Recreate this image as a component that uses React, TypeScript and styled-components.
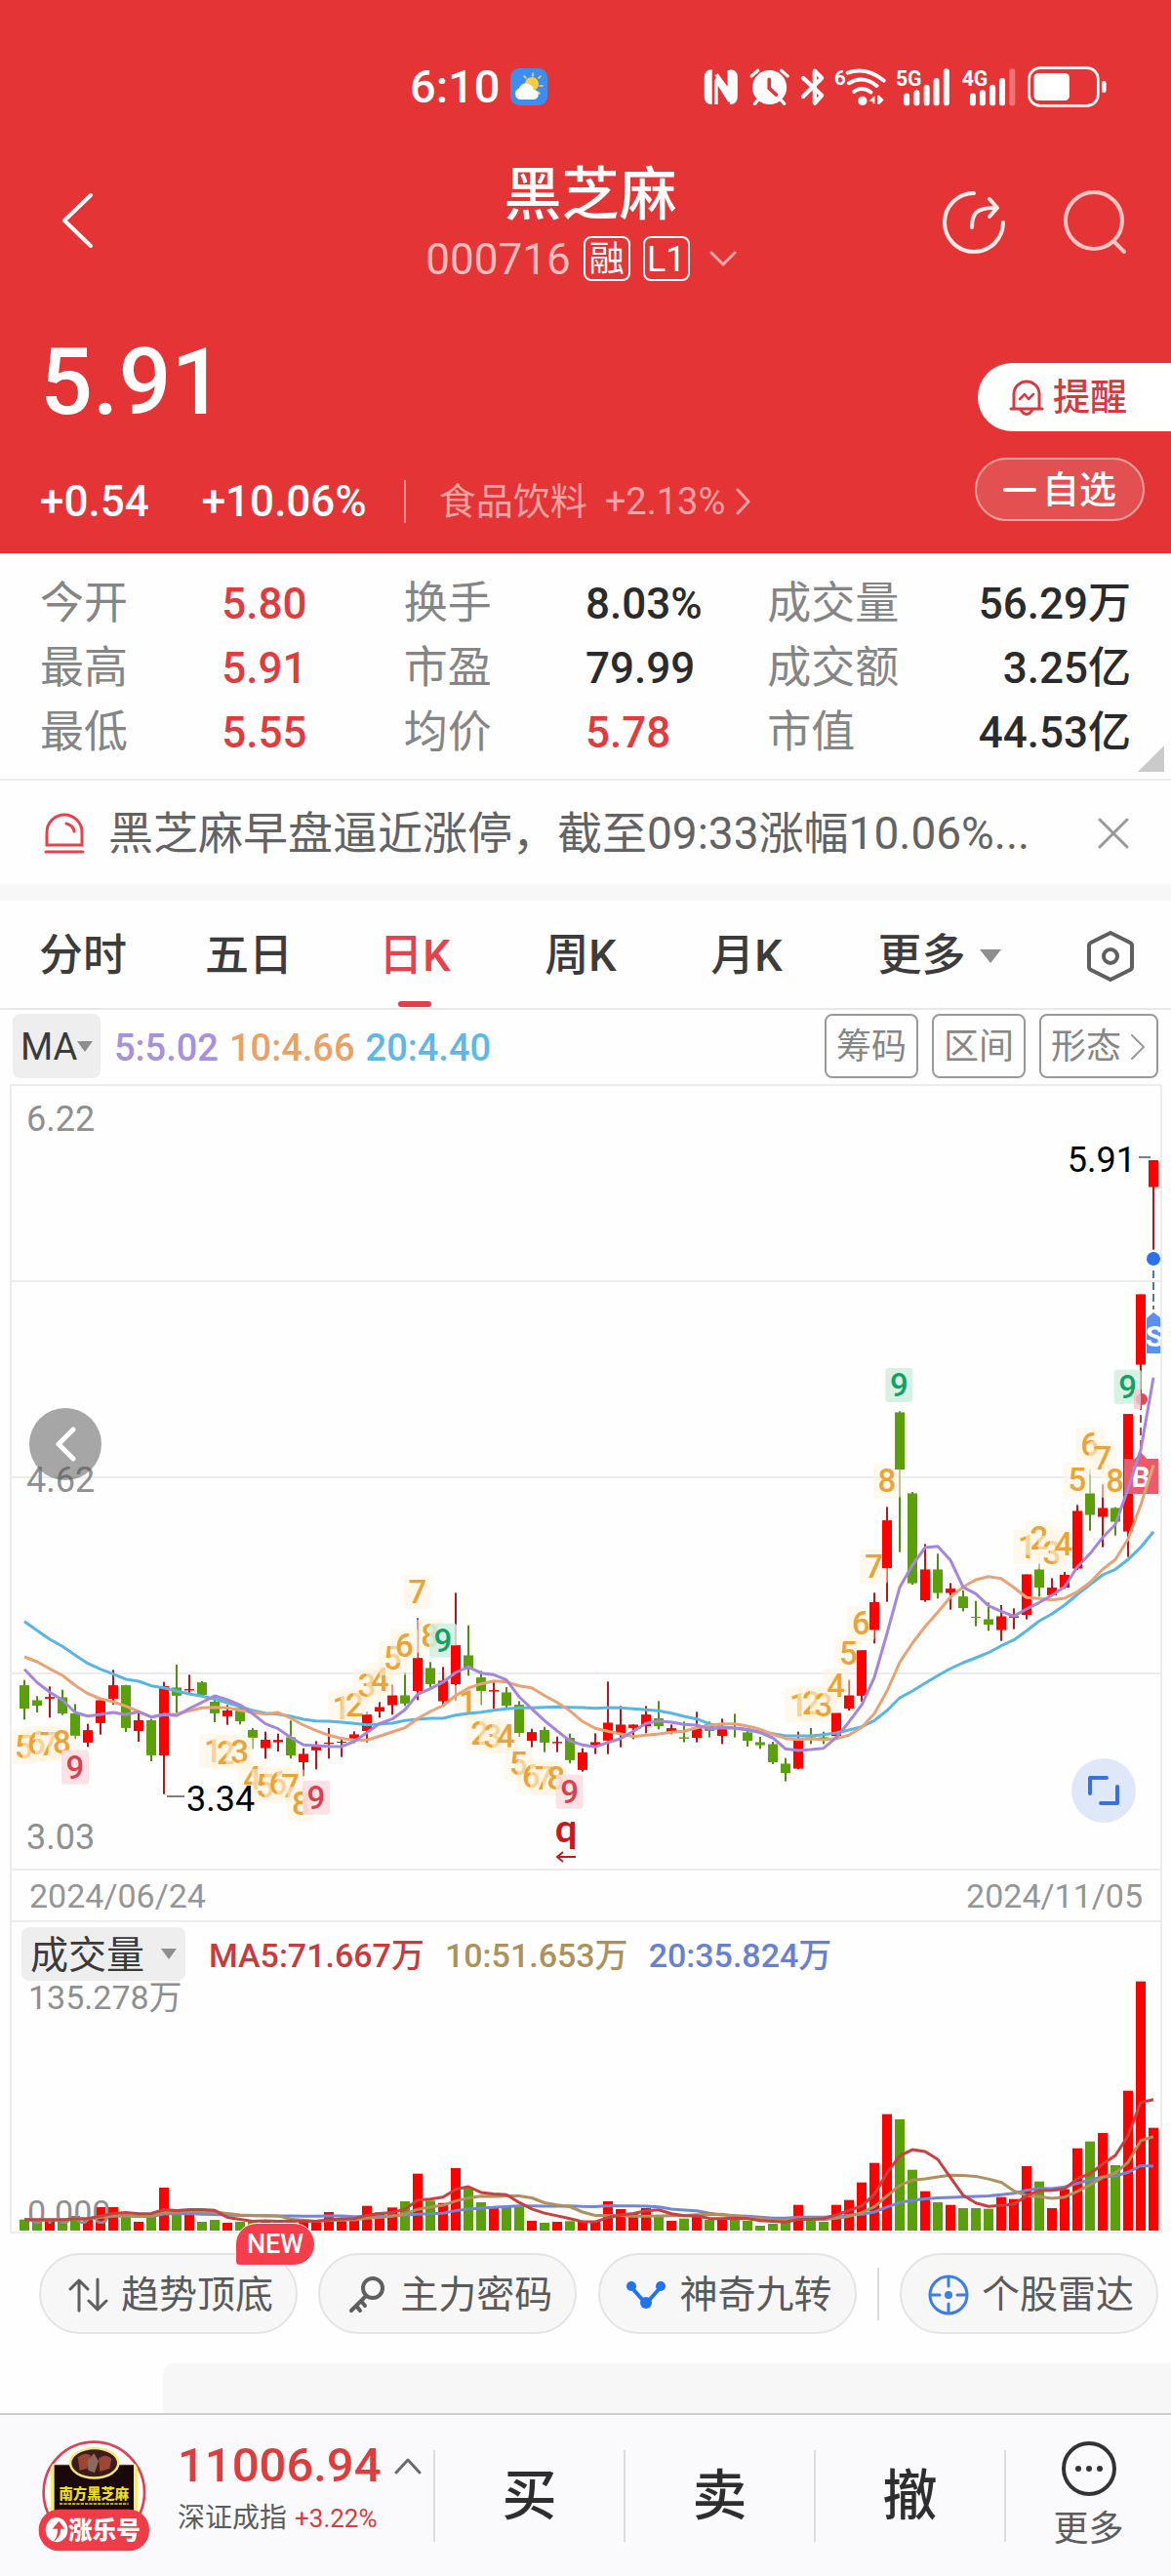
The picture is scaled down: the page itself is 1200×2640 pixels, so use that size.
import React from "react";
import styled, { createGlobalStyle } from "styled-components";

const FONT = `Roboto, "Noto Sans CJK SC", sans-serif`;
const RED = "#e23b3e";
const UP = "#fe0000";
const DOWN = "#5aa00a";

const GlobalStyle = createGlobalStyle`
  *, *::before, *::after { box-sizing: border-box; }
  body { margin: 0; background: #fefefe; font-family: ${FONT}; }
  button, select { font-family: inherit; border: 0; background: none; padding: 0; margin: 0; color: inherit; }
  svg { display: block; flex: none; }
`;

/* ---------- header ---------- */

const Page = styled.div`
  display: flex;
  flex-direction: column;
  min-height: 100vh;
`;

const Header = styled.header`
  background: #e43436;
  color: #fff;
`;

const StatusBar = styled.div`
  display: flex;
  align-items: center;
  justify-content: space-between;
  height: 118px;
  padding: 60px 64px 0 35%;
`;

const Clock = styled.div`
  display: flex;
  align-items: center;
  gap: 10px;
  font-size: 47px;
  line-height: 56px;
  font-weight: 500;
`;

const NavBar = styled.nav`
  display: grid;
  grid-template-columns: 1fr auto 1fr;
  align-items: center;
  padding: 50px 46px 0 56px;
`;

const NavTitle = styled.div`
  display: flex;
  flex-direction: column;
  align-items: center;
  gap: 10px;
`;

const Title = styled.h1`
  margin: 0;
  font-size: 59px;
  line-height: 64px;
  font-weight: 500;
`;

const SubTitle = styled.div`
  display: flex;
  align-items: center;
  gap: 13px;
  height: 46px;
  margin-right: 12px;
`;

const Code = styled.span`
  font-size: 44px;
  line-height: 48px;
  padding-top: 2px;
  color: #fcbcbc;
`;

const Tag = styled.span`
  width: 48px;
  height: 46px;
  border: 2px solid #fff;
  border-radius: 8px;
  font-size: 36px;
  line-height: 44px;
  text-align: center;
`;

const IconButton = styled.button`
  display: inline-flex;
  align-items: center;
  justify-content: center;
  cursor: pointer;
`;

const NavActions = styled.div`
  display: flex;
  justify-content: flex-end;
  gap: 60px;
`;

const Quote = styled.section`
  display: flex;
  justify-content: space-between;
  padding: 0 0 31px 41px;
`;

const QuoteMain = styled.div`
  padding-top: 49px;
`;

const Price = styled.div`
  font-size: 95px;
  line-height: 110px;
  font-weight: 500;
`;

const Changes = styled.div`
  display: flex;
  align-items: center;
  margin-top: 45px;
  height: 44px;
  font-size: 44px;
  line-height: 44px;
  font-weight: 500;
`;

const Change = styled.span`
  margin-right: 54px;
  &:nth-child(2) { margin-right: 38px; }
`;

const Sector = styled.a`
  display: flex;
  align-items: center;
  gap: 18px;
  height: 44px;
  padding-left: 34px;
  border-left: 2px solid #f08a8a;
  font-size: 38px;
  font-weight: 400;
  color: #f9a3a3;
  text-decoration: none;
`;

const QuoteSide = styled.div`
  display: flex;
  flex-direction: column;
  gap: 27px;
  padding-top: 84px;
`;

const AlertButton = styled.button`
  display: flex;
  align-items: center;
  gap: 8px;
  width: 198px;
  height: 70px;
  padding-left: 31px;
  border-radius: 35px 0 0 35px;
  background: #fff;
  color: #d63a3e;
  font-size: 38px;
  line-height: 44px;
  font-weight: 500;
`;

const WatchButton = styled.button`
  display: flex;
  align-items: center;
  justify-content: center;
  gap: 6px;
  width: 174px;
  height: 65px;
  margin-left: -3px;
  border: 2px solid #f3a0a0;
  border-radius: 33px;
  background: #e25052;
  color: #fff;
  font-size: 38px;
  line-height: 44px;
  font-weight: 500;
`;

/* ---------- figures ---------- */

const Stats = styled.dl`
  position: relative;
  display: grid;
  grid-template-columns: repeat(6, 1fr);
  margin: 0;
  padding: 19px 41px 14px;
  border-bottom: 2px solid #ececec;
  font-size: 45px;
  line-height: 66px;
`;

const StatName = styled.dt`
  color: #858585;
  white-space: nowrap;
`;

const StatValue = styled.dd<{ $up?: boolean; $right?: boolean }>`
  margin: 0;
  font-size: 44px;
  font-weight: 500;
  color: ${(p) => (p.$up ? RED : "#2b2b2b")};
  text-align: ${(p) => (p.$right ? "right" : "left")};
  white-space: nowrap;
`;

const Corner = styled.i`
  position: absolute;
  right: 7px;
  bottom: 7px;
  border-left: 27px solid transparent;
  border-bottom: 27px solid #cacaca;
`;

const News = styled.div`
  display: flex;
  align-items: center;
  height: 106px;
  padding: 2px 43px 0 45px;
  gap: 24px;
  color: #636363;
  font-size: 46px;
  line-height: 60px;
`;

const NewsText = styled.a`
  flex: 1;
  min-width: 0;
  color: inherit;
  text-decoration: none;
  white-space: nowrap;
`;

const Band = styled.div`
  height: 17px;
  background: #f7f7f7;
`;

/* ---------- tabs ---------- */

const Tabs = styled.div`
  display: grid;
  grid-template-columns: repeat(5, 34fr) 45fr 25fr;
  height: 112px;
  border-bottom: 2px solid #e8e8e8;
`;

const Tab = styled.button<{ $active?: boolean }>`
  position: relative;
  display: flex;
  align-items: center;
  justify-content: center;
  gap: 14px;
  padding-top: 4px;
  font-size: 45px;
  line-height: 60px;
  color: ${(p) => (p.$active ? "#e8414c" : "#3c3c3c")};
  font-weight: 500;
  &::after {
    content: "";
    display: ${(p) => (p.$active ? "block" : "none")};
    position: absolute;
    bottom: 1px;
    left: 50%;
    width: 34px;
    height: 6px;
    margin-left: -17px;
    border-radius: 3px;
    background: #e0404c;
  }
`;

const Caret = styled.i<{ $size: number }>`
  border: ${(p) => p.$size}px solid transparent;
  border-top: ${(p) => p.$size + 3}px solid #8e8e8e;
  border-bottom: 0;
  pointer-events: none;
`;

const Toolbar = styled.div`
  display: flex;
  align-items: center;
  justify-content: space-between;
  height: 76px;
  padding: 0 13px 2px 13px;
`;

const Row = styled.div<{ $gap: number }>`
  display: flex;
  align-items: center;
  gap: ${(p) => p.$gap}px;
`;

const Picker = styled.label<{ $w: number; $h: number; $pad: number }>`
  position: relative;
  display: flex;
  align-items: center;
  width: ${(p) => p.$w}px;
  height: ${(p) => p.$h}px;
  border-radius: 8px;
  background: #eeeeee;
  & > select {
    appearance: none;
    width: 100%;
    height: 100%;
    padding: 2px 0 0 ${(p) => p.$pad}px;
    color: #3a3a3a;
  }
  & > i {
    position: absolute;
    right: ${(p) => p.$pad}px;
  }
`;

const MaSelect = styled.select`
  font-size: 38px;
`;

const VolSelect = styled.select`
  font-size: 39px;
`;

const Legend = styled.span<{ $color: string; $size: number }>`
  padding-top: 3px;
  font-size: ${(p) => p.$size}px;
  line-height: 44px;
  font-weight: 500;
  color: ${(p) => p.$color};
  white-space: nowrap;
`;

const ToolButton = styled.button`
  display: flex;
  align-items: center;
  gap: 8px;
  height: 66px;
  padding: 2px 10px 0;
  border: 2px solid #9a9a9a;
  border-radius: 8px;
  color: #868686;
  font-size: 36px;
  line-height: 44px;
`;

/* ---------- chart ---------- */

const Frame = styled.section`
  margin: 0 9px 0 10px;
  border: 2px solid #ececec;
`;

const KlineBox = styled.div`
  position: relative;
`;

const ChartSvg = styled.svg<{ $clip?: boolean }>`
  width: 100%;
  height: auto;
  overflow: ${(p) => (p.$clip ? "hidden" : "visible")};
  font-family: ${FONT};
`;

const RoundButton = styled(IconButton)<{ $side: "left" | "right" }>`
  position: absolute;
  ${(p) =>
    p.$side === "left"
      ? "left: 18px; top: 330px; width: 74px; height: 74px; background: rgba(90, 90, 90, 0.54);"
      : "right: 25px; bottom: 47px; width: 66px; height: 66px; background: #dfe8f9;"}
  border-radius: 50%;
`;

const Dates = styled.div`
  display: flex;
  justify-content: space-between;
  padding: 2px 18px 0;
  border: 2px solid #ececec;
  border-width: 2px 0;
  font-size: 34px;
  line-height: 49px;
  color: #959595;
`;

const VolumeHead = styled.div`
  display: flex;
  align-items: center;
  gap: 24px;
  height: 60px;
  padding: 5px 0 0 10px;
`;

/* ---------- shortcuts ---------- */

const Shortcuts = styled.div`
  display: flex;
  align-items: center;
  justify-content: space-between;
  padding: 20px 13px 0 40px;
`;

const Pill = styled.button`
  position: relative;
  display: flex;
  align-items: center;
  justify-content: center;
  gap: 13px;
  width: 265px;
  height: 83px;
  padding: 2px 0 0 4px;
  border: 2px solid #e4e4e4;
  border-radius: 42px;
  background: #f7f7f7;
  color: #5a5a5a;
  font-size: 39px;
  line-height: 50px;
  white-space: nowrap;
`;

const NewBadge = styled.span`
  position: absolute;
  top: -33px;
  right: -20px;
  width: 82px;
  height: 44px;
  border: 1px solid #fff;
  border-radius: 22px 22px 22px 4px;
  background: #f53d4c;
  color: #fff;
  font-size: 27px;
  line-height: 42px;
  font-weight: 500;
  text-align: center;
`;

const Rule = styled.i<{ $h: number }>`
  width: 2px;
  height: ${(p) => p.$h}px;
  background: #dcdcdc;
`;

const NextPanel = styled.div`
  flex: 1;
  min-height: 50px;
  margin: 30px 0 0 167px;
  border-radius: 12px 0 0 0;
  background: #f7f7f7;
`;

/* ---------- bottom bar ---------- */

const Footer = styled.footer`
  display: grid;
  grid-template-columns: 148fr 65fr 65fr 65fr 57fr;
  align-items: center;
  height: 167px;
  border-top: 2px solid #cdcdd0;
  background: #fafafc;
`;

const IndexCell = styled.div`
  display: flex;
  align-items: center;
  gap: 29px;
  padding-left: 39px;
`;

const IndexText = styled.div`
  display: flex;
  flex-direction: column;
  gap: 8px;
  padding-bottom: 18px;
`;

const IndexValue = styled.div`
  display: flex;
  align-items: center;
  gap: 13px;
  font-size: 49px;
  line-height: 56px;
  font-weight: 500;
  color: #e03c3c;
`;

const IndexName = styled.div`
  display: flex;
  align-items: center;
  gap: 8px;
  font-size: 28px;
  line-height: 36px;
  color: #5c5c5c;
  & > b {
    font-size: 26px;
    font-weight: 400;
    color: #d83c3c;
  }
`;

const TradeButton = styled.button`
  height: 94px;
  border-left: 2px solid #dcdcdf;
  font-size: 56px;
  line-height: 64px;
  font-weight: 500;
  color: #2e2e2e;
`;

const MoreButton = styled.button`
  display: flex;
  flex-direction: column;
  align-items: center;
  justify-content: center;
  gap: 12px;
  height: 94px;
  border-left: 2px solid #dcdcdf;
  font-size: 36px;
  line-height: 44px;
  color: #5c5c5c;
`;

/* ---------- data ---------- */

// One entry per session: [rising, high, body top, body bottom, low], in thirds of a chart unit.
type Candle = [number, number, number, number, number];
const candles: Candle[] = [
  [0, 668, 685, 756, 790], [0, 718, 731, 747, 768], [1, 688, 721, 725, 784], [0, 698, 722, 771, 776],
  [0, 742, 771, 839, 850], [1, 803, 823, 860, 874], [1, 730, 731, 800, 836], [1, 637, 685, 726, 744],
  [0, 683, 685, 815, 828], [1, 770, 792, 825, 858], [0, 788, 792, 899, 918], [1, 674, 687, 900, 1019],
  [0, 621, 692, 716, 770], [1, 652, 697, 700, 712], [0, 672, 676, 714, 716], [0, 714, 735, 770, 798],
  [1, 745, 762, 779, 806], [0, 745, 755, 795, 805], [0, 816, 822, 845, 880], [1, 827, 852, 877, 910],
  [1, 833, 853, 859, 888], [0, 793, 845, 900, 910], [1, 878, 896, 921, 964], [1, 856, 871, 884, 943],
  [1, 816, 861, 864, 910], [1, 845, 858, 861, 905], [1, 826, 836, 848, 862], [1, 766, 775, 825, 860],
  [1, 735, 752, 765, 784], [1, 682, 716, 745, 775], [0, 645, 716, 740, 748], [1, 478, 601, 702, 730],
  [0, 613, 632, 681, 690], [1, 628, 671, 733, 745], [1, 400, 562, 681, 732], [0, 500, 593, 630, 655],
  [0, 640, 661, 702, 745], [1, 675, 700, 703, 757], [0, 690, 707, 747, 755], [0, 733, 745, 831, 843],
  [1, 818, 829, 855, 875], [0, 812, 822, 860, 890], [1, 842, 859, 862, 890], [0, 833, 846, 914, 925],
  [1, 878, 891, 944, 950], [1, 832, 860, 872, 896], [1, 673, 800, 854, 896], [1, 748, 806, 832, 875],
  [1, 805, 806, 815, 850], [1, 748, 775, 810, 832], [0, 733, 786, 810, 820], [1, 805, 817, 828, 835],
  [0, 796, 845, 848, 860], [1, 766, 815, 846, 860], [0, 796, 805, 824, 845], [1, 787, 812, 840, 865],
  [0, 772, 801, 804, 845], [0, 822, 830, 855, 873], [0, 843, 860, 868, 880], [0, 858, 866, 921, 927],
  [0, 908, 926, 954, 980], [1, 827, 850, 940, 943], [0, 816, 845, 848, 865], [0, 827, 845, 848, 865],
  [1, 770, 770, 840, 845], [1, 668, 716, 756, 762], [1, 577, 577, 716, 735], [1, 400, 429, 514, 556],
  [1, 136, 178, 324, 428], [0, -158, -154, 21, 275], [0, 90, 95, 370, 375], [1, 250, 329, 423, 428],
  [0, 280, 329, 400, 418], [1, 370, 388, 400, 452], [0, 393, 412, 447, 457], [0, 425, 474, 477, 503],
  [0, 430, 482, 498, 517], [1, 438, 473, 514, 548], [1, 448, 473, 476, 512], [1, 344, 344, 468, 482],
  [0, 310, 329, 384, 412], [1, 355, 384, 407, 410], [1, 336, 345, 384, 388], [1, 130, 149, 325, 330],
  [0, 22, 95, 160, 209], [1, 67, 140, 166, 260], [0, 137, 140, 181, 224], [1, -149, -149, 211, 290],
  [1, -517, -517, -302, -225], [1, -930, -930, -848, -655],
];

const ma5 = [
  635, 676, 706, 730, 768, 779, 774, 768, 775, 766, 782, 774, 778, 756, 737, 717, 729, 745, 772, 803, 818, 845, 868,
  870, 872, 873, 857, 830, 802, 788, 760, 712, 695, 675, 645, 628, 647, 652, 668, 720, 757, 793, 825, 855, 868, 874,
  860, 848, 826, 802, 794, 798, 805, 807, 818, 815, 816, 820, 830, 846, 880, 885, 882, 878, 845, 797, 745, 660, 525,
  383, 315, 261, 257, 300, 383, 403, 440, 457, 472, 450, 430, 408, 382, 320, 280, 230, 190, 80, -40, -262,
];
const ma10 = [
  597, 612, 634, 654, 685, 710, 726, 735, 749, 765, 782, 775, 773, 763, 754, 752, 754, 761, 768, 773, 768, 786, 807,
  824, 838, 848, 853, 853, 841, 828, 815, 787, 765, 747, 716, 693, 680, 671, 674, 686, 692, 716, 737, 763, 796, 817,
  826, 834, 842, 838, 834, 829, 826, 815, 808, 803, 803, 810, 820, 835, 848, 851, 849, 852, 848, 838, 814, 772, 702,
  614, 555, 504, 460, 413, 382, 360, 350, 356, 384, 415, 418, 422, 417, 397, 368, 328, 298, 235, 130, 8,
];
const ma20 = [
  488, 516, 543, 565, 592, 617, 635, 650, 666, 672, 686, 692, 702, 711, 718, 727, 738, 750, 762, 770, 773, 780, 789,
  794, 795, 798, 802, 806, 804, 801, 793, 789, 786, 786, 776, 771, 767, 761, 757, 754, 754, 752, 751, 752, 753, 755,
  753, 754, 757, 760, 763, 770, 780, 788, 803, 812, 816, 822, 828, 833, 840, 840, 840, 836, 831, 822, 812, 793, 762,
  723, 702, 678, 655, 633, 615, 600, 584, 563, 545, 517, 487, 465, 438, 405, 375, 345, 328, 298, 260, 212,
];

// Traded volume per session, as bar heights in thirds of a chart unit.
const volumes = [
  34, 32, 32, 35, 45, 39, 72, 72, 49, 27, 42, 132, 59, 61, 27, 33, 24, 27, 32, 32, 27, 29, 27, 27, 57, 39, 35, 76, 56,
  71, 90, 175, 92, 85, 192, 131, 87, 69, 72, 73, 30, 24, 27, 29, 27, 27, 90, 66, 52, 69, 42, 30, 37, 45, 33, 39, 37,
  30, 15, 21, 27, 79, 30, 27, 79, 94, 148, 208, 358, 342, 187, 121, 87, 79, 69, 69, 67, 103, 97, 198, 151, 69, 127,
  253, 274, 300, 201, 430, 766, 316,
];

type Kind = "count" | "buy" | "sell";
type Mark = [number, number, number, Kind?];
const marks: Mark[] = [
  [73, 872, 5], [112, 862, 6], [150, 865, 7], [190, 857, 8], [231, 935, 9, "buy"],
  [655, 885, 1], [694, 890, 2], [737, 888, 3], [776, 968, 4], [815, 992, 5], [855, 985, 6], [893, 992, 7],
  [925, 1048, 8], [972, 1028, 9, "buy"],
  [1050, 752, 1], [1090, 745, 2], [1128, 685, 3], [1168, 665, 4], [1207, 600, 5], [1243, 562, 6], [1284, 395, 7],
  [1322, 532, 8], [1362, 545, 9, "sell"],
  [1438, 735, 1], [1475, 830, 2], [1515, 840, 3], [1555, 840, 4], [1594, 925, 5], [1633, 962, 6], [1672, 970, 7],
  [1710, 970, 8], [1751, 1010, 9, "buy"],
  [2455, 745, 1], [2494, 738, 2], [2532, 745, 3], [2570, 685, 4], [2608, 585, 5], [2647, 492, 6], [2687, 318, 7],
  [2727, 55, 8], [2764, -240, 9, "sell"],
  [3157, 258, 1], [3195, 230, 2], [3234, 275, 3], [3270, 250, 4], [3312, 50, 5], [3350, -57, 6], [3390, -15, 7],
  [3428, 55, 8], [3467, -235, 9, "sell"],
];
const markInk: Record<Kind, string> = { count: "#eba338", buy: "#d8404e", sell: "#14a064" };
const markFill: Record<Kind, string> = { count: "#fff3e0", buy: "#fddde0", sell: "#d0efe0" };

const sx = (i: number) => 25 + i * 13;
const sy = (v: number) => 386 + v / 3;
const line = (values: number[], y: (v: number) => number) =>
  values.map((v, i) => `${sx(i)},${y(v).toFixed(1)}`).join(" ");
const average = (values: number[], n: number) =>
  values.map((_, i) => {
    const part = values.slice(Math.max(0, i - n + 1), i + 1);
    return part.reduce((a, b) => a + b, 0) / part.length;
  });

function KlineChart() {
  return (
    <ChartSvg $clip viewBox="12 0 1177 802" role="img" aria-label="日K线图">
      {[200, 401, 602].map((y) => (
        <line key={y} x1="12" x2="1189" y1={y} y2={y} stroke="#ececec" strokeWidth="2" />
      ))}
      <g fontSize="36" fill="#8f8f8f">
        <text x="27" y="46">6.22</text>
        <text x="27" y="416">4.62</text>
        <text x="27" y="782">3.03</text>
      </g>
      {candles.map(([up, high, top, bottom, low], i) => (
        <g key={i} fill={up ? UP : DOWN}>
          <rect x={sx(i) - 1} y={sy(high)} width="2" height={(low - high) / 3} fill={up ? "#b41a1c" : "#4f9010"} />
          <rect x={sx(i) - 5} y={sy(top)} width="10" height={(bottom - top) / 3} />
        </g>
      ))}
      {marks.map(([x, y, n, kind = "count"], i) => {
        const cx = x / 3;
        const cy = sy(y);
        return (
          <g key={i}>
            <rect x={cx - 14} y={cy - 17} width="28" height="35" rx="3" fill={markFill[kind]} opacity={kind === "count" ? 0.6 : 0.85} />
            <text x={cx} y={cy + 12} fontSize="33" fontWeight="500" textAnchor="middle" fill={markInk[kind]}>{n}</text>
          </g>
        );
      })}
      {candles.map(([up, , top, bottom], i) => (
        <rect key={i} x={sx(i) - 5} y={sy(top)} width="10" height={(bottom - top) / 3} fill={up ? UP : DOWN} />
      ))}
      <g>
        <path d="M1169 311v58" stroke="#c04050" strokeWidth="2" strokeDasharray="8 5" />
        <circle cx="1170" cy="321" r="6" fill="#d94a5c" />
        <path d="M1162 311h7v20h-7z" fill="#f0c8cc" opacity=".8" />
        <path d="M1152 382h11l6-7 6 7h12v36h-35z" fill="#ee5a6c" />
        <text x="1169" y="411" fontSize="30" fontWeight="700" textAnchor="middle" fill="#fff">B</text>
        <circle cx="1182" cy="177" r="7" fill="#2b70ee" />
        <path d="M1182 189v40" stroke="#4a7fa0" strokeWidth="2" strokeDasharray="8 4" />
        <path d="M1175 238l7-6 8 6v36h-15z" fill="#5a90ee" />
        <text x="1183" y="267" fontSize="30" fontWeight="700" textAnchor="middle" fill="#fff">S</text>
      </g>
      <g fill="none" strokeWidth="3" strokeLinejoin="round">
        <polyline points={line(ma20, sy)} stroke="#58b6e2" />
        <polyline points={line(ma10, sy)} stroke="#e9a274" />
        <polyline points={line(ma5, sy)} stroke="#a487dc" />
      </g>
      <g fontSize="36" fill="#000">
        <text x="1164" y="88" textAnchor="end">5.91</text>
        <text x="191" y="743">3.34</text>
      </g>
      <path d="M1167 73h12M171 728h18" stroke="#808080" strokeWidth="2" />
      <text x="580" y="775" fontSize="40" fontWeight="700" fontFamily="Lato, sans-serif" textAnchor="middle" fill="#c4191d">q</text>
      <path d="M590 790h-19m6-5-6 5 6 5" fill="none" stroke="#c4191d" strokeWidth="2" />
    </ChartSvg>
  );
}

function VolumeChart() {
  const y = (v: number) => 256 - v / 3;
  return (
    <ChartSvg viewBox="12 0 1177 257" role="img" aria-label="成交量图">
      {volumes.map((v, i) => (
        <rect key={i} x={sx(i) - 5} y={y(v)} width="10" height={v / 3} fill={candles[i][0] ? UP : DOWN} />
      ))}
      <g fontSize="34" fill="#8f8f8f">
        <text x="29" y="29">135.278万</text>
        <text x="28" y="249">0.000</text>
      </g>
      <g fill="none" strokeWidth="3" strokeLinejoin="round">
        <polyline points={line(average(volumes, 20), y)} stroke="#7286d4" />
        <polyline points={line(average(volumes, 10), y)} stroke="#b0905c" />
        <polyline points={line(average(volumes, 5), y)} stroke="#c8403f" />
      </g>
    </ChartSvg>
  );
}

/* ---------- icons ---------- */

const WeatherIcon = () => (
  <svg width="38" height="38" viewBox="0 0 38 38">
    <rect width="38" height="38" rx="9" fill="#3c8ff0" />
    <g stroke="#ffd75a" strokeWidth="1.6" strokeLinecap="round">
      <path d="M23 5v3M31 8l-2 2M14 8l2 2M33 18h-3M30 26l-2-2" />
    </g>
    <circle cx="22" cy="16" r="7" fill="#ffcc3e" />
    <path d="M10 32a6 6 0 0 1-1-11.500a7.500 7.500 0 0 1 14.500 1.500a5 5 0 0 1 .5 10z" fill="#fff" />
  </svg>
);

const StatusIcons = () => (
  <svg width="417" height="43" viewBox="55 50 1250 130" fontFamily="Roboto, sans-serif" fontWeight="700" fill="#fff" aria-label="NFC 闹钟 蓝牙 WLAN 5G 4G 电量">
    <path d="M82 60v108q-24 0-24-24V84q0-24 24-24zM137 60v108q24 0 24-24V84q0-24-24-24z" />
    <path d="M90 78l42 66v-28l-32-44zM90 94v74h10v-58l32 50h6V62h-8v60l-30-44z" />
    <circle cx="260" cy="115" r="53" />
    <path d="M204 80l20-17M316 80l-20-17M226 152l-12 14M294 152l12 14" stroke="#fff" strokeWidth="10" strokeLinecap="round" />
    <path d="M259 90v28l22 20" stroke="#e43436" strokeWidth="11" fill="none" strokeLinecap="round" />
    <path d="M364 86l58 54-22 24V64l22 22-58 58" stroke="#fff" strokeWidth="13" fill="none" strokeLinejoin="round" strokeLinecap="round" />
    <text x="461" y="106" fontSize="62">6</text>
    <g fill="none" stroke="#fff" strokeWidth="12" strokeLinecap="round">
      <path d="M502 70q58-20 112 24M506 102q44-26 86 8M522 128q26-18 52 2" />
    </g>
    <circle cx="548" cy="157" r="14" />
    <path d="M568 158l18-18v26h-6v-8zM594 140h6l14 14-14 14h-6z" />
    <text x="651" y="110" fontSize="64">5G</text>
    <text x="856" y="110" fontSize="64">4G</text>
    <g stroke="#fff" strokeWidth="18" strokeLinecap="round">
      <path d="M685 142v21M716 132v31M747 116v47M777 95v68M808 66v97" />
      <path d="M890 142v21M920 132v31M951 116v47M981 95v68" />
      <path d="M1012 66v97" opacity=".32" />
    </g>
    <rect x="1064" y="55" width="214" height="117" rx="34" fill="none" stroke="#fff" strokeWidth="8" />
    <rect x="1079" y="71" width="110" height="85" rx="14" />
    <rect x="1289" y="95" width="14" height="37" rx="7" />
  </svg>
);

const Chevron = ({ w, h, d, color, sw }: { w: number; h: number; d: string; color: string; sw: number }) => (
  <svg width={w} height={h} viewBox={`0 0 ${w} ${h}`} fill="none" stroke={color} strokeWidth={sw} strokeLinecap="round" strokeLinejoin="round">
    <path d={d} />
  </svg>
);

const ShareIcon = () => (
  <svg width="64" height="66" viewBox="0 0 64 66" fill="none" stroke="#ffeaea" strokeWidth="4" strokeLinecap="round" strokeLinejoin="round">
    <path d="M32 3a30 30 0 1 0 30 30M30 38c0-14 4-20 24-20M48 9l8 9-8 9" />
  </svg>
);

const SearchIcon = () => (
  <svg width="64" height="66" viewBox="0 0 64 66" fill="none" stroke="#ffc4c4" strokeWidth="4" strokeLinecap="round">
    <circle cx="31" cy="31" r="29" />
    <path d="M53 54l9 9" />
  </svg>
);

const BellIcon = () => (
  <svg width="38" height="38" viewBox="0 0 38 38" fill="none" stroke="#d63a3e" strokeWidth="3" strokeLinejoin="round" strokeLinecap="round">
    <path d="M3 31h32M6 31V16a13 13 0 0 1 26 0v15M13 32q6 9 12 0" />
    <path d="M12 21l5-5 4 5 5-5" strokeWidth="2.500" />
  </svg>
);

const SirenIcon = () => (
  <svg width="42" height="42" viewBox="0 0 42 42" fill="none" stroke="#e8414c" strokeWidth="3" strokeLinecap="round">
    <path d="M3 33V20a18 18 0 0 1 36 0v13zM2 40h38M23 11q7 2 8 8" />
  </svg>
);

const HexIcon = () => (
  <svg width="50" height="54" viewBox="0 0 50 54" fill="none" stroke="#5f5f5f" strokeWidth="4" strokeLinejoin="round">
    <path d="M25 3l20 10q2 1 2 3v22q0 2-2 3L25 51 5 41q-2-1-2-3V16q0-2 2-3z" />
    <circle cx="25" cy="27" r="7" />
  </svg>
);

const TrendIcon = () => (
  <svg width="42" height="36" viewBox="0 0 42 36" fill="none" stroke="#5f5f5f" strokeWidth="3" strokeLinecap="round" strokeLinejoin="round">
    <path d="M12 34V3L3 12M12 3l9 9M31 2v31l-9-9M31 33l9-9" />
  </svg>
);

const KeyIcon = () => (
  <svg width="42" height="40" viewBox="0 0 42 40" fill="none" stroke="#5f5f5f" strokeWidth="4" strokeLinecap="round">
    <circle cx="27" cy="13" r="10" />
    <path d="M20 21L5 36M10 31l4 5M15 26l4 5" />
  </svg>
);

const NineIcon = () => (
  <svg width="42" height="30" viewBox="0 0 42 30" fill="#2273f2">
    <path d="M6 7l15 17L36 7" fill="none" stroke="#2273f2" strokeWidth="4" />
    <circle cx="6" cy="6" r="5" />
    <circle cx="36" cy="6" r="5" />
    <circle cx="21" cy="23" r="6" />
  </svg>
);

const RadarIcon = () => (
  <svg width="42" height="42" viewBox="0 0 42 42" fill="none" stroke="#3a7ee6" strokeWidth="3" strokeLinecap="round">
    <circle cx="21" cy="21" r="19" />
    <path d="M21 3v9M21 30v9M3 21h9M30 21h9" />
    <circle cx="21" cy="21" r="4" fill="#3a7ee6" stroke="none" />
  </svg>
);

const BrandLogo = () => (
  <svg width="114" height="114" viewBox="28 68 342 342" fontFamily="'Noto Sans CJK SC', sans-serif" fontWeight="900">
    <defs>
      <clipPath id="badge"><circle cx="200" cy="228" r="154" /></clipPath>
    </defs>
    <circle cx="200" cy="228" r="155" fill="#fff" stroke="#dc4258" strokeWidth="8" />
    <g clipPath="url(#badge)">
      <path d="M66 140h268v150H66z" fill="#f3ee70" />
      <path d="M78 144h244v140H78z" fill="#1c0808" />
      <ellipse cx="201" cy="138" rx="78" ry="49" fill="#f0ea78" />
      <ellipse cx="201" cy="138" rx="70" ry="42" fill="#3c1c1c" />
      <path d="M150 120q20-18 40-6l-10 40-24 6zM214 124q20-18 40 0l-6 30-30 10z" fill="#9c4634" />
      <path d="M180 130l20-22 14 24-12 36-20-8z" fill="#8a6a5a" />
      <text x="200" y="247" fontSize="43" textAnchor="middle" fill="#e8dc28">南方黑芝麻</text>
      <path d="M94 263h212" stroke="#b8a428" strokeWidth="6" strokeDasharray="10 3" />
    </g>
    <rect x="30" y="280" width="340" height="128" rx="62" fill="#ee3c48" />
    <ellipse cx="85" cy="343" rx="34" ry="38" fill="#fff" />
    <path d="M68 384q22-14 20-44h-16l20-24 18 24h-12q0 28-30 44z" fill="#ee3c48" />
    <text x="232" y="371" fontSize="74" textAnchor="middle" fill="#fff">涨乐号</text>
  </svg>
);

const MoreIcon = () => (
  <svg width="56" height="56" viewBox="0 0 56 56" fill="#333">
    <circle cx="28" cy="28" r="26" fill="none" stroke="#333" strokeWidth="4" />
    <circle cx="17" cy="28" r="3" />
    <circle cx="28" cy="28" r="3" />
    <circle cx="39" cy="28" r="3" />
  </svg>
);

/* ---------- page ---------- */

const stats: { name: string; value: string; up?: boolean }[] = [
  { name: "今开", value: "5.80", up: true },
  { name: "换手", value: "8.03%" },
  { name: "成交量", value: "56.29万" },
  { name: "最高", value: "5.91", up: true },
  { name: "市盈", value: "79.99" },
  { name: "成交额", value: "3.25亿" },
  { name: "最低", value: "5.55", up: true },
  { name: "均价", value: "5.78", up: true },
  { name: "市值", value: "44.53亿" },
];

export default function App() {
  return (
    <Page>
      <GlobalStyle />
      <Header>
        <StatusBar>
          <Clock>6:10<WeatherIcon /></Clock>
          <StatusIcons />
        </StatusBar>
        <NavBar>
          <div>
            <IconButton aria-label="返回">
              <Chevron w={46} h={58} d="M37 3L10 29l27 26" color="#fff" sw={4} />
            </IconButton>
          </div>
          <NavTitle>
            <Title>黑芝麻</Title>
            <SubTitle>
              <Code>000716</Code>
              <Tag>融</Tag>
              <Tag>L1</Tag>
              <IconButton aria-label="展开">
                <Chevron w={42} h={20} d="M9 4l12 12 12-12" color="#f9a8a8" sw={3} />
              </IconButton>
            </SubTitle>
          </NavTitle>
          <NavActions>
            <IconButton aria-label="分享"><ShareIcon /></IconButton>
            <IconButton aria-label="搜索"><SearchIcon /></IconButton>
          </NavActions>
        </NavBar>
        <Quote>
          <QuoteMain>
            <Price>5.91</Price>
            <Changes>
              <Change>+0.54</Change>
              <Change>+10.06%</Change>
              <Sector href="#sector">
                食品饮料
                <Row $gap={8}>
                  +2.13%
                  <Chevron w={20} h={30} d="M5 3l11 12L5 27" color="#f9a3a3" sw={3} />
                </Row>
              </Sector>
            </Changes>
          </QuoteMain>
          <QuoteSide>
            <AlertButton><BellIcon />提醒</AlertButton>
            <WatchButton>
              <Chevron w={34} h={6} d="M2 3h30" color="#fff" sw={4} />
              自选
            </WatchButton>
          </QuoteSide>
        </Quote>
      </Header>

      <Stats>
        {stats.map((s, i) => (
          <React.Fragment key={s.name}>
            <StatName>{s.name}</StatName>
            <StatValue $up={s.up} $right={i % 3 === 2}>{s.value}</StatValue>
          </React.Fragment>
        ))}
        <Corner />
      </Stats>

      <News>
        <SirenIcon />
        <NewsText href="#news">黑芝麻早盘逼近涨停，截至09:33涨幅10.06%...</NewsText>
        <IconButton aria-label="关闭">
          <Chevron w={32} h={32} d="M2 2l28 28M30 2L2 30" color="#999" sw={3} />
        </IconButton>
      </News>
      <Band />

      <Tabs>
        <Tab>分时</Tab>
        <Tab>五日</Tab>
        <Tab $active>日K</Tab>
        <Tab>周K</Tab>
        <Tab>月K</Tab>
        <Tab aria-haspopup="menu">更多<Caret $size={11} /></Tab>
        <Tab aria-label="图表设置"><HexIcon /></Tab>
      </Tabs>

      <Toolbar>
        <Row $gap={14}>
          <Picker $w={90} $h={66} $pad={8}>
            <MaSelect aria-label="主图指标"><option>MA</option></MaSelect>
            <Caret $size={8} />
          </Picker>
          <Row $gap={11}>
            <Legend $size={38} $color="#a690e0">5:5.02</Legend>
            <Legend $size={38} $color="#eba066">10:4.66</Legend>
            <Legend $size={38} $color="#5cb8e8">20:4.40</Legend>
          </Row>
        </Row>
        <Row $gap={14}>
          <ToolButton>筹码</ToolButton>
          <ToolButton>区间</ToolButton>
          <ToolButton>
            形态
            <Chevron w={18} h={28} d="M3 2l12 12L3 26" color="#9a9a9a" sw={2} />
          </ToolButton>
        </Row>
      </Toolbar>

      <Frame>
        <KlineBox>
          <KlineChart />
          <RoundButton $side="left" aria-label="向前">
            <Chevron w={24} h={36} d="M20 3L5 18l15 15" color="#fff" sw={5} />
          </RoundButton>
          <RoundButton $side="right" aria-label="全屏">
            <Chevron w={34} h={32} d="M20 3H3v16M31 12v17H14" color="#3673dc" sw={4} />
          </RoundButton>
        </KlineBox>
        <Dates>
          <span>2024/06/24</span>
          <span>2024/11/05</span>
        </Dates>
        <VolumeHead>
          <Picker $w={168} $h={55} $pad={9}>
            <VolSelect aria-label="副图指标"><option>成交量</option></VolSelect>
            <Caret $size={8} />
          </Picker>
          <Row $gap={21}>
            <Legend $size={34} $color="#c83a3c">MA5:71.667万</Legend>
            <Legend $size={34} $color="#ac915a">10:51.653万</Legend>
            <Legend $size={34} $color="#6880d0">20:35.824万</Legend>
          </Row>
        </VolumeHead>
        <VolumeChart />
      </Frame>

      <Shortcuts>
        <Pill><TrendIcon />趋势顶底<NewBadge>NEW</NewBadge></Pill>
        <Pill><KeyIcon />主力密码</Pill>
        <Pill><NineIcon />神奇九转</Pill>
        <Rule $h={54} />
        <Pill><RadarIcon />个股雷达</Pill>
      </Shortcuts>
      <NextPanel />

      <Footer>
        <IndexCell>
          <BrandLogo />
          <IndexText>
            <IndexValue>
              11006.94
              <Chevron w={28} h={18} d="M2 16L14 3l12 13" color="#6a6a6a" sw={3} />
            </IndexValue>
            <IndexName>深证成指<b>+3.22%</b></IndexName>
          </IndexText>
        </IndexCell>
        <TradeButton>买</TradeButton>
        <TradeButton>卖</TradeButton>
        <TradeButton>撤</TradeButton>
        <MoreButton><MoreIcon />更多</MoreButton>
      </Footer>
    </Page>
  );
}
